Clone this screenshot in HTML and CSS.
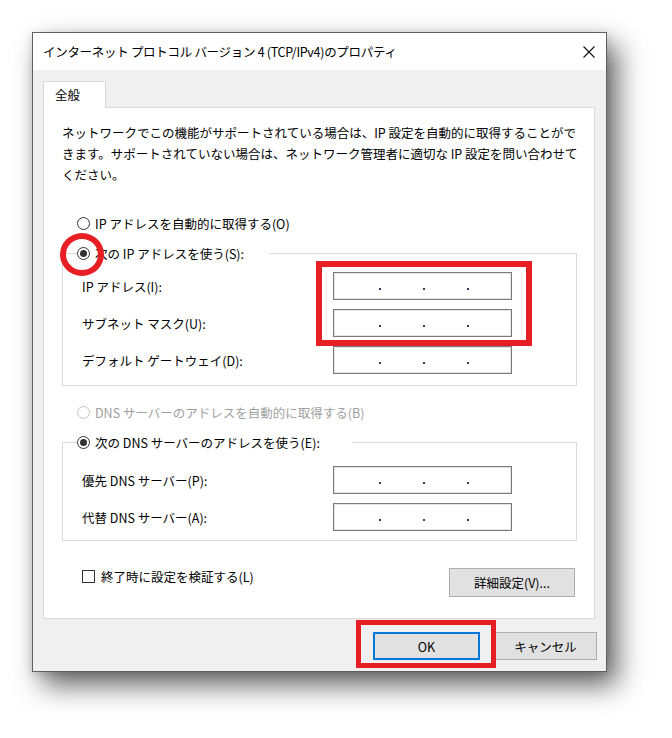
FILE: index.html
```html
<!DOCTYPE html>
<html lang="ja">
<head>
<meta charset="utf-8">
<title>インターネット プロトコル バージョン 4 (TCP/IPv4)のプロパティ</title>
<link rel="stylesheet" href="styles.css">
</head>
<body>
<div class="stage">
  <div class="window">
    <div class="titlebar">
      <span class="title">インターネット プロトコル バージョン 4 (TCP/IPv4)のプロパティ</span>
      <svg class="close" width="12" height="12" viewBox="0 0 12 12"><path d="M0.5 0.5 L11.5 11.5 M11.5 0.5 L0.5 11.5" stroke="#111" stroke-width="1.1" fill="none"/></svg>
    </div>
    <div class="client">
      <div class="tabs"><div class="tab">全般</div></div>
      <div class="panel">
        <p class="desc">ネットワークでこの機能がサポートされている場合は、IP 設定を自動的に取得することがで<br>きます。サポートされていない場合は、ネットワーク管理者に適切な IP 設定を問い合わせて<br>ください。</p>
        <div class="option first"><span class="radio"></span><span>IP アドレスを自動的に取得する(O)</span></div>
        <fieldset class="group g1">
          <legend class="option"><span class="radio checked"></span><span>次の IP アドレスを使う(S):</span></legend>
          <div class="row"><span class="label">IP アドレス(I):</span><span class="ipfield"><i></i><i></i><i></i></span></div>
          <div class="row"><span class="label">サブネット マスク(U):</span><span class="ipfield"><i></i><i></i><i></i></span></div>
          <div class="row"><span class="label">デフォルト ゲートウェイ(D):</span><span class="ipfield"><i></i><i></i><i></i></span></div>
        </fieldset>
        <div class="option dns-auto disabled"><span class="radio"></span><span>DNS サーバーのアドレスを自動的に取得する(B)</span></div>
        <fieldset class="group g2">
          <legend class="option"><span class="radio checked"></span><span>次の DNS サーバーのアドレスを使う(E):</span></legend>
          <div class="row"><span class="label">優先 DNS サーバー(P):</span><span class="ipfield"><i></i><i></i><i></i></span></div>
          <div class="row"><span class="label">代替 DNS サーバー(A):</span><span class="ipfield"><i></i><i></i><i></i></span></div>
        </fieldset>
        <div class="bottom">
          <div class="check"><span class="box"></span><span>終了時に設定を検証する(L)</span></div>
          <button class="btn adv">詳細設定(V)...</button>
        </div>
      </div>
      <div class="footer">
        <button class="btn ok">OK</button>
        <button class="btn cancel">キャンセル</button>
      </div>
    </div>
    <div class="mark circle"></div>
    <div class="mark rect1"></div>
    <div class="mark rect2"></div>
  </div>
</div>
</body>
</html>
```
FILE: styles.css
```css
* { box-sizing: border-box; }
body {
  margin: 0;
  background: #fff;
  font-family: "Noto Sans CJK JP", "Noto Sans", sans-serif;
  font-size: 12.5px;
  color: #000;
}
.stage { padding: 32px 0 60px 32px; }
.window {
  position: relative;
  width: 575px;
  border: 1px solid #5f5f5f;
  background: #f0f0f0;
  box-shadow: 10px 13px 26px rgba(0,0,0,.62), 0 2px 8px rgba(0,0,0,.12);
}
.titlebar {
  height: 37px;
  background: #fff;
  display: flex;
  align-items: center;
  justify-content: space-between;
  padding: 0 11px 0 10px;
}
.title { white-space: nowrap; letter-spacing: -0.3px; }
.client { padding: 11px 0 11px 10px; }
.tabs { display: flex; }
.tab {
  position: relative;
  z-index: 1;
  width: 63px;
  height: 27px;
  background: #fff;
  border: 1px solid #d9d9d9;
  border-bottom: none;
  padding-left: 11px;
  line-height: 26px;
}
.panel {
  width: 552px;
  margin-top: -1px;
  background: #fff;
  border: 1px solid #d9d9d9;
  padding: 14px 17px 21px 18px;
}
.desc { margin: 0; line-height: 21px; white-space: nowrap; }
.option { display: flex; align-items: center; height: 20px; gap: 5px; white-space: nowrap; }
.first { margin-top: 28px; padding-left: 15px; }
.radio {
  width: 13px;
  height: 13px;
  border: 1px solid #333;
  border-radius: 50%;
  background: #fff;
  display: flex;
  align-items: center;
  justify-content: center;
  flex: none;
}
.radio.checked::after {
  content: "";
  width: 7px;
  height: 7px;
  border-radius: 50%;
  background: #333;
}
.group {
  margin: 10px 0 0;
  min-width: 0;
  border: 1px solid #dcdcdc;
  padding: 9px 0 11px 19px;
}
.group legend { padding: 0 25px 0 0; margin-left: -5px; }
.g2 { padding-top: 14px; padding-bottom: 9px; }
.g2 legend { padding-right: 32px; }
.row { display: flex; align-items: center; height: 28px; white-space: nowrap; }
.row + .row { margin-top: 9px; }
.label { width: 251px; flex: none; }
.ipfield {
  width: 179px;
  height: 28px;
  border: 1px solid #7a7a7a;
  box-shadow: inset 0 0 0 1px #e4e4e4;
  background: #fff;
  display: flex;
  align-items: center;
  padding-left: 45px;
  gap: 42px;
}
.ipfield i { width: 2px; height: 2px; background: #2d3d62; margin-top: 6px; }
.dns-auto { margin-top: 16px; padding-left: 15px; }
.disabled { color: #a0a0a0; }
.disabled .radio { border-color: #c5c5c5; }
.bottom {
  display: flex;
  justify-content: space-between;
  align-items: flex-start;
  margin-top: 25px;
  padding-right: 2px;
}
.check { display: flex; align-items: center; height: 20px; padding-left: 20px; gap: 6px; white-space: nowrap; }
.box { width: 13px; height: 13px; border: 1px solid #333; background: #fff; flex: none; }
.btn {
  font: inherit;
  color: #000;
  background: #e1e1e1;
  border: 1px solid #adadad;
  height: 28px;
  padding: 0;
}
.adv { width: 126px; height: 29px; margin-top: 2px; }
.footer { display: flex; justify-content: flex-end; gap: 14px; margin-top: 13px; padding-right: 9px; }
.ok { width: 107px; border: 2px solid #0078d7; }
.cancel { width: 103px; }
.mark { position: absolute; pointer-events: none; border: 5px solid #e81e25; }
.circle { left: 27px; top: 200px; width: 44px; height: 43px; border-radius: 50%; border-width: 6px; }
.rect1 { left: 283px; top: 228px; width: 216px; height: 85px; border-width: 6px; }
.rect2 { left: 323px; top: 587px; width: 140px; height: 48px; }
```
